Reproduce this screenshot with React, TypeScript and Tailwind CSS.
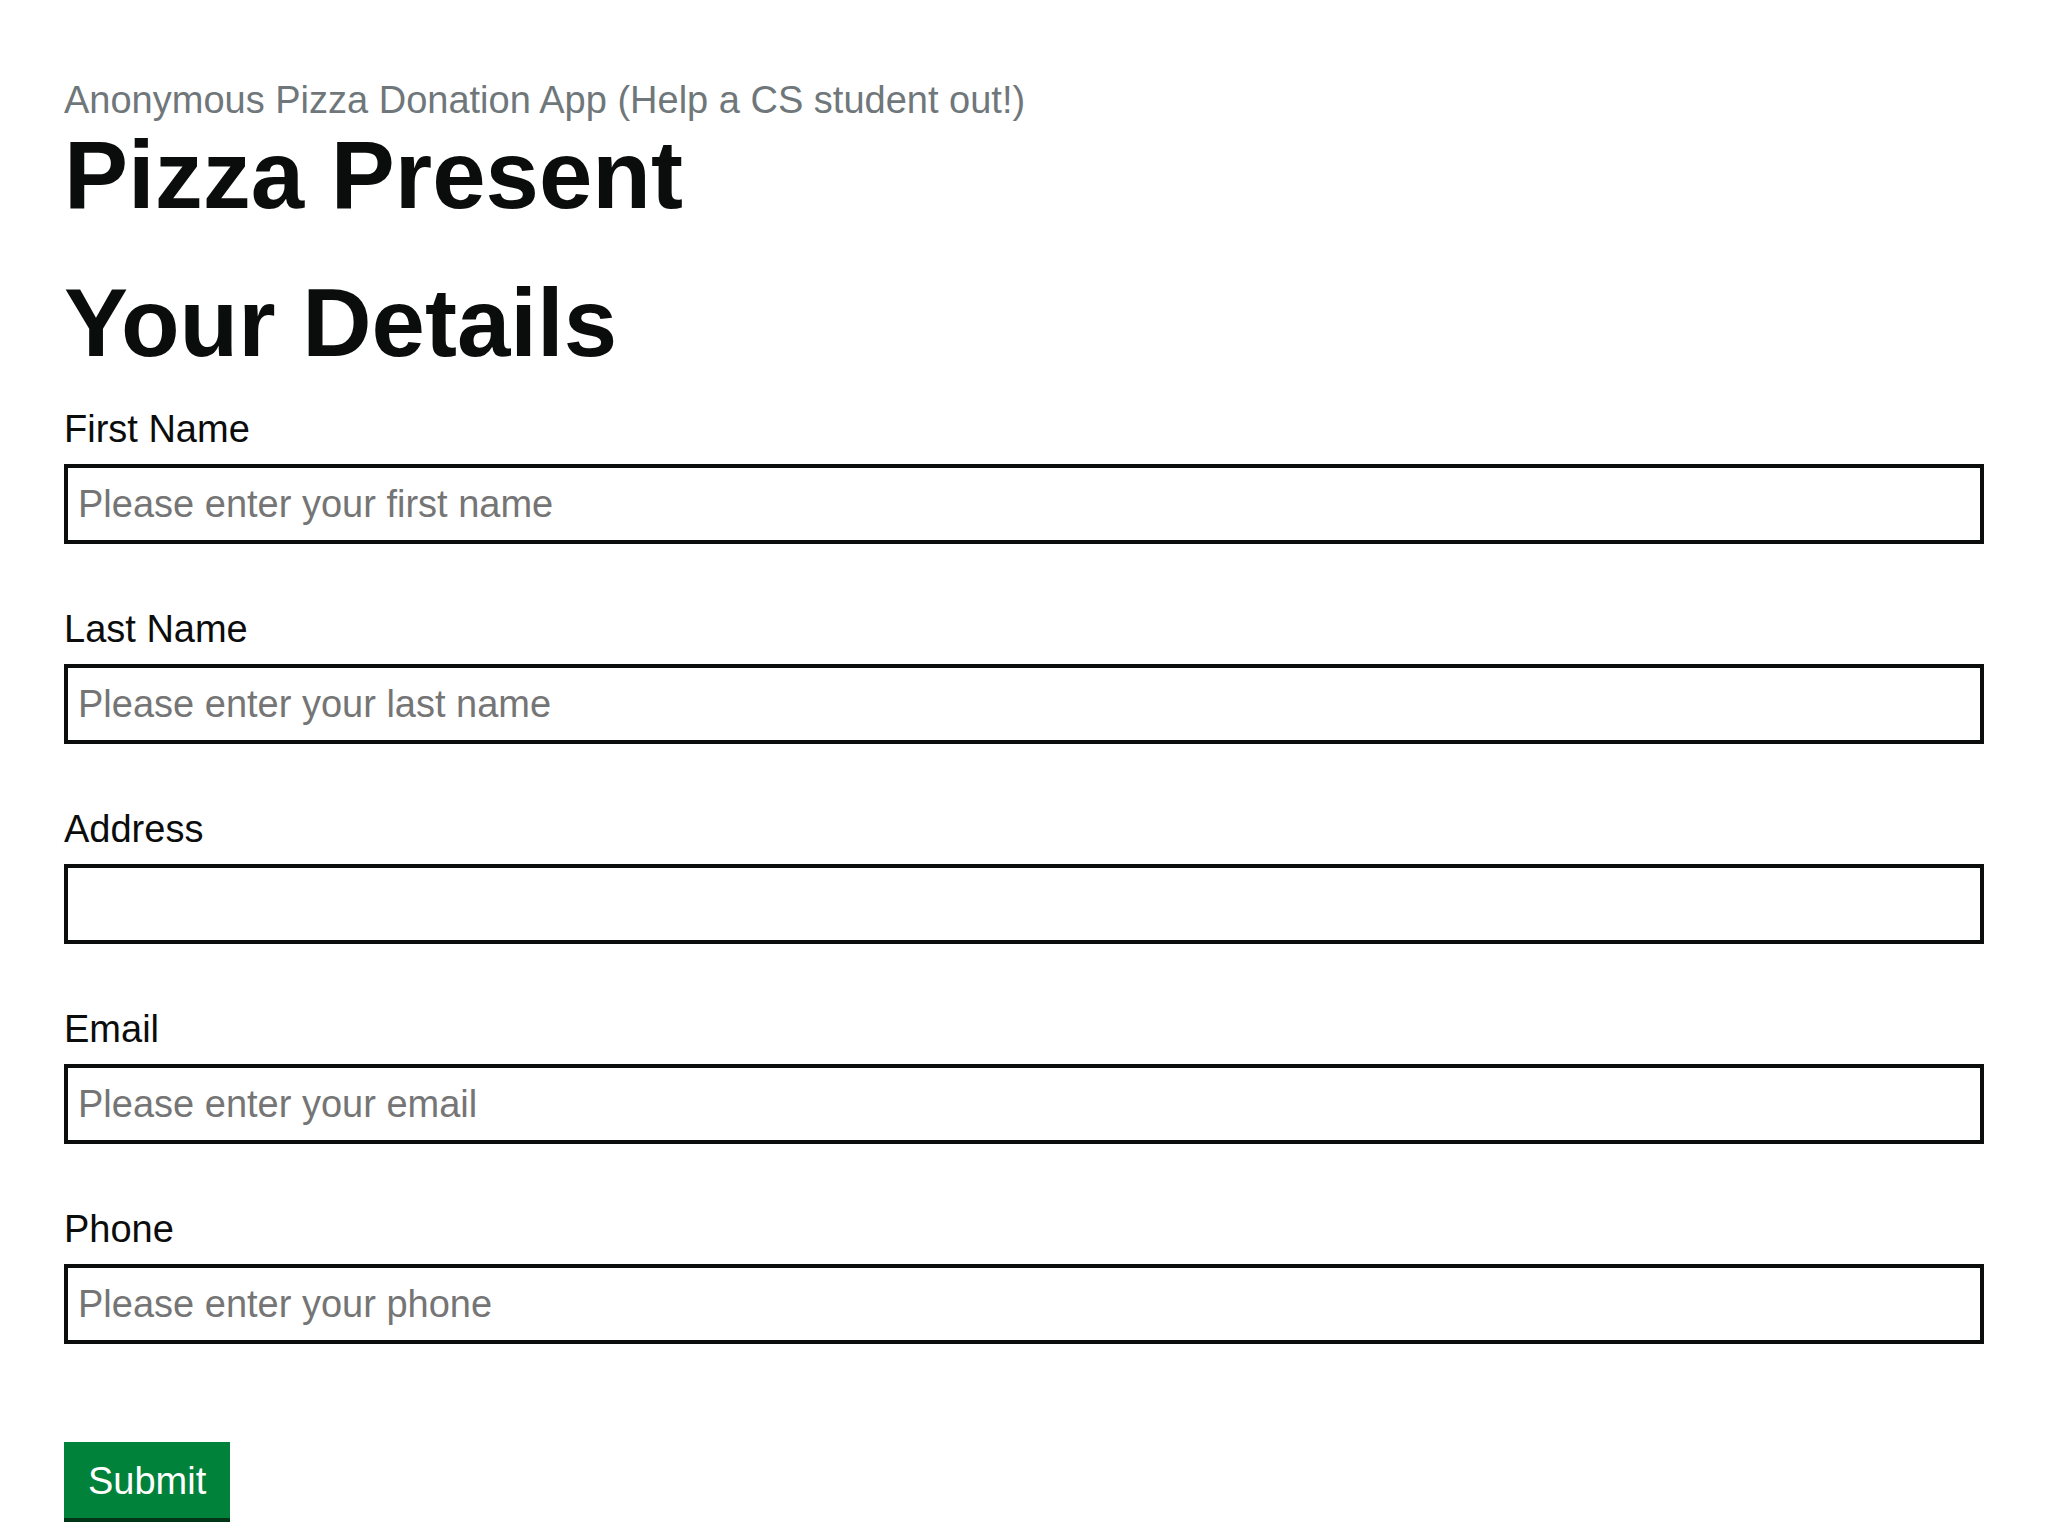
import React from "react";

const fields = [
  { id: "first-name", label: "First Name", placeholder: "Please enter your first name" },
  { id: "last-name", label: "Last Name", placeholder: "Please enter your last name" },
  { id: "address", label: "Address", placeholder: "" },
  { id: "email", label: "Email", placeholder: "Please enter your email" },
  { id: "phone", label: "Phone", placeholder: "Please enter your phone" },
];

export default function App() {
  return (
    <div className="min-h-screen bg-white px-[64px] pt-[75px] font-['Liberation_Sans',Arial,sans-serif] text-[#0b0c0c]">
      <span className="block text-[38px] leading-[50px] text-[#6f777b]">
        Anonymous Pizza Donation App (Help a CS student out!)
      </span>
      <h1 className="text-[96px] font-bold leading-[100px]">Pizza Present</h1>
      <form onSubmit={(e) => e.preventDefault()}>
        <h2 className="mt-[48px] mb-[31px] text-[96px] font-bold leading-[100px]">Your Details</h2>
        {fields.map((f) => (
          <div key={f.id} className="mb-[60px]">
            <label htmlFor={f.id} className="mb-[10px] block text-[38px] leading-[50px]">
              {f.label}
            </label>
            <input
              id={f.id}
              type="text"
              placeholder={f.placeholder}
              className="block h-[80px] w-full border-[4px] border-[#0b0c0c] px-[10px] text-[38px] outline-none placeholder:text-[#757575]"
            />
          </div>
        ))}
        <button
          type="submit"
          className="mt-[38px] border-[4px] border-transparent bg-[#00823b] px-[20px] pt-[16px] pb-[14px] text-[38px] leading-[38px] text-white shadow-[0_4px_0_#003618]"
        >
          Submit
        </button>
      </form>
    </div>
  );
}
